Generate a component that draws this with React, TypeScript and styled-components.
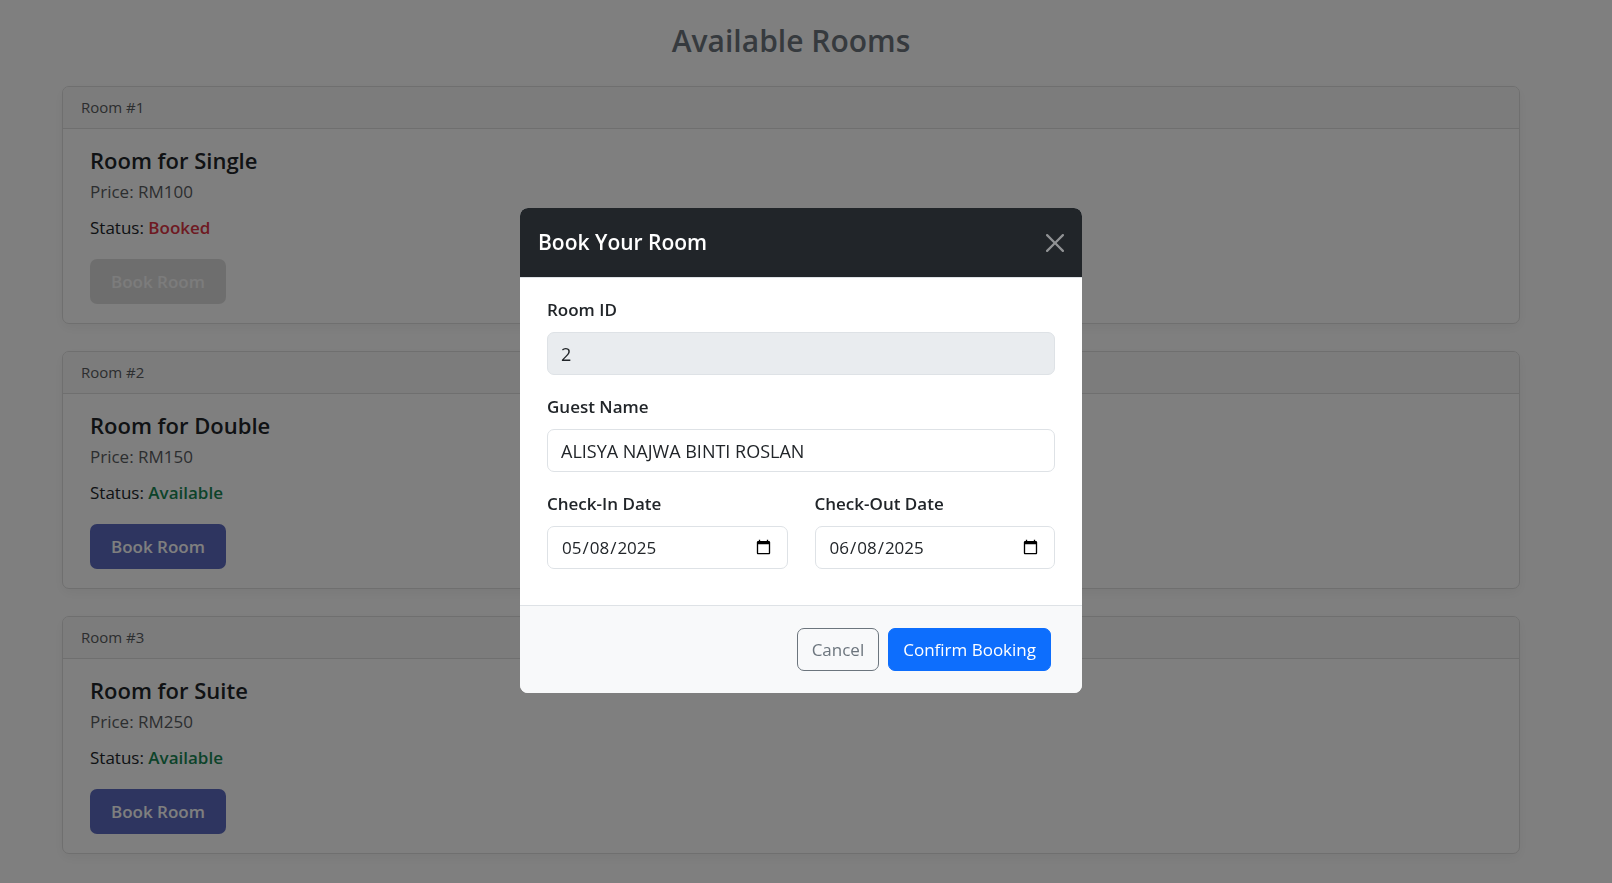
import React, { useState } from "react";
import styled, { createGlobalStyle } from "styled-components";

const GlobalStyle = createGlobalStyle`
  *, *::before, *::after { box-sizing: border-box; }
  body {
    margin: 0;
    background: #fff;
    color: #212529;
    font-family: "Segoe UI", "Open Sans", "Noto Sans", sans-serif;
    font-size: 17px;
    line-height: 27px;
  }
  button, input { font: inherit; }
`;

const Page = styled.main`
  padding: 18px 92px 27px 62px;
`;

const PageTitle = styled.h2`
  margin: 0 0 23px;
  color: #6c757d;
  font-size: 30px;
  font-weight: 600;
  line-height: 45px;
  text-align: center;
`;

const RoomList = styled.div`
  display: flex;
  flex-direction: column;
  gap: 27px;
  max-width: 1458px;
  margin: 0 auto;
`;

const Card = styled.article`
  border: 1px solid #dfdfdf;
  border-radius: 7px;
  background: #fff;
  box-shadow: 0 4px 12px rgba(0, 0, 0, 0.05);
`;

const CardHeader = styled.header`
  padding: 8px 18px 9px;
  border-bottom: 1px solid #dfdfdf;
  border-radius: 6px 6px 0 0;
  background: #f8f8f8;
  color: #595c5f;
  font-size: 15px;
  line-height: 24px;
`;

const CardBody = styled.div`
  padding: 18px 27px 19px;
`;

const CardTitle = styled.h5`
  margin: 0 0 4px;
  font-size: 22px;
  font-weight: 600;
  line-height: 27px;
`;

const CardText = styled.p<{ $muted?: boolean }>`
  margin: 0 0 9px;
  color: ${({ $muted }) => ($muted ? "#595c5f" : "#212529")};
`;

const Status = styled.span<{ $available: boolean }>`
  color: ${({ $available }) => ($available ? "#198754" : "#dc3545")};
  font-weight: 600;
`;

const BookButton = styled.button`
  margin-top: 9px;
  padding: 9px 21px;
  border: 0;
  border-radius: 7px;
  background: #5c6bc0;
  color: #fff;
  font-weight: 600;
  line-height: 27px;
  cursor: pointer;

  &:disabled {
    background: #ddd;
    color: #f8f8f8;
    cursor: default;
  }
`;

const Backdrop = styled.div`
  position: fixed;
  inset: 0;
  display: flex;
  align-items: center;
  justify-content: center;
  padding: 18px 10px 0 0;
  background: rgba(0, 0, 0, 0.5);
`;

const Dialog = styled.div`
  width: 100%;
  max-width: 562px;
  border-radius: 8px;
  overflow: hidden;
  background: #fff;
`;

const DialogHeader = styled.header`
  display: flex;
  align-items: center;
  justify-content: space-between;
  padding: 18px;
  border-bottom: 1px solid #dee2e6;
  background: #212529;
  color: #fff;
`;

const DialogTitle = styled.h5`
  margin: 0;
  font-size: 21px;
  font-weight: 600;
  line-height: 33px;
`;

const CloseButton = styled.button`
  display: flex;
  padding: 0;
  border: 0;
  background: none;
  color: #fff;
  opacity: 0.5;
  cursor: pointer;
`;

const DialogBody = styled.div`
  display: grid;
  grid-template-columns: 1fr 1fr;
  gap: 18px 27px;
  padding: 18px 27px 36px;
`;

const Field = styled.div<{ $wide?: boolean }>`
  display: flex;
  flex-direction: column;
  gap: 9px;
  min-width: 0;
  grid-column: ${({ $wide }) => ($wide ? "1 / -1" : "auto")};
`;

const Label = styled.label`
  font-weight: 600;
`;

const Input = styled.input`
  width: 100%;
  height: 43px;
  padding: 7px 13px;
  border: 1px solid #dee2e6;
  border-radius: 7px;
  background: #fff;
  color: #212529;
  outline: 0;

  &[type="text"] {
    font-size: 18px;
  }

  &:read-only:not([type="date"]) {
    background: #e9ecef;
  }

  &::-webkit-datetime-edit {
    padding: 0;
  }
`;

const DialogFooter = styled.footer`
  display: flex;
  justify-content: flex-end;
  gap: 9px;
  padding: 22px 31px;
  border-top: 1px solid #dee2e6;
  background: #f8f9fa;
`;

const ActionButton = styled.button<{ $primary?: boolean }>`
  padding: 7px 14px;
  border: 1px solid ${({ $primary }) => ($primary ? "#0d6efd" : "#6c757d")};
  border-radius: 7px;
  background: ${({ $primary }) => ($primary ? "#0d6efd" : "transparent")};
  color: ${({ $primary }) => ($primary ? "#fff" : "#6c757d")};
  cursor: pointer;
`;

const rooms = [
  { id: 1, type: "Single", price: 100, available: false },
  { id: 2, type: "Double", price: 150, available: true },
  { id: 3, type: "Suite", price: 250, available: true },
];

export default function App() {
  const [roomId, setRoomId] = useState<number | null>(2);
  const [guest, setGuest] = useState("ALISYA NAJWA BINTI ROSLAN");
  const [checkIn, setCheckIn] = useState("2025-05-08");
  const [checkOut, setCheckOut] = useState("2025-06-08");
  const close = () => setRoomId(null);

  return (
    <>
      <GlobalStyle />
      <Page>
        <PageTitle>Available Rooms</PageTitle>
        <RoomList>
          {rooms.map((room) => (
            <Card key={room.id}>
              <CardHeader>Room #{room.id}</CardHeader>
              <CardBody>
                <CardTitle>Room for {room.type}</CardTitle>
                <CardText $muted>Price: RM{room.price}</CardText>
                <CardText>
                  Status:{" "}
                  <Status $available={room.available}>
                    {room.available ? "Available" : "Booked"}
                  </Status>
                </CardText>
                <BookButton
                  type="button"
                  disabled={!room.available}
                  onClick={() => setRoomId(room.id)}
                >
                  Book Room
                </BookButton>
              </CardBody>
            </Card>
          ))}
        </RoomList>
      </Page>
      {roomId !== null && (
        <Backdrop>
          <Dialog role="dialog" aria-modal="true" aria-labelledby="booking-title">
            <DialogHeader>
              <DialogTitle id="booking-title">Book Your Room</DialogTitle>
              <CloseButton type="button" aria-label="Close" onClick={close}>
                <svg width="18" height="18" viewBox="0 0 16 16" fill="currentColor">
                  <path d="M.293.293a1 1 0 0 1 1.414 0L8 6.586 14.293.293a1 1 0 1 1 1.414 1.414L9.414 8l6.293 6.293a1 1 0 0 1-1.414 1.414L8 9.414l-6.293 6.293a1 1 0 0 1-1.414-1.414L6.586 8 .293 1.707a1 1 0 0 1 0-1.414z" />
                </svg>
              </CloseButton>
            </DialogHeader>
            <DialogBody>
              <Field $wide>
                <Label htmlFor="room-id">Room ID</Label>
                <Input id="room-id" type="text" value={roomId} readOnly />
              </Field>
              <Field $wide>
                <Label htmlFor="guest-name">Guest Name</Label>
                <Input
                  id="guest-name"
                  type="text"
                  value={guest}
                  onChange={(e) => setGuest(e.target.value)}
                />
              </Field>
              <Field>
                <Label htmlFor="check-in">Check-In Date</Label>
                <Input
                  id="check-in"
                  type="date"
                  value={checkIn}
                  onChange={(e) => setCheckIn(e.target.value)}
                />
              </Field>
              <Field>
                <Label htmlFor="check-out">Check-Out Date</Label>
                <Input
                  id="check-out"
                  type="date"
                  value={checkOut}
                  onChange={(e) => setCheckOut(e.target.value)}
                />
              </Field>
            </DialogBody>
            <DialogFooter>
              <ActionButton type="button" onClick={close}>
                Cancel
              </ActionButton>
              <ActionButton type="button" $primary onClick={close}>
                Confirm Booking
              </ActionButton>
            </DialogFooter>
          </Dialog>
        </Backdrop>
      )}
    </>
  );
}
